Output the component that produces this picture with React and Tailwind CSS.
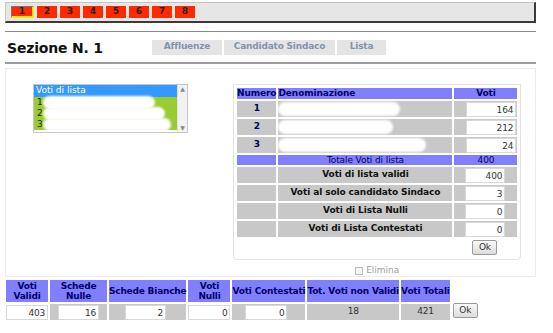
import React from "react";

const sezioni = ["1", "2", "3", "4", "5", "6", "7", "8"];

const liste = [
    { n: "1", voti: "164", blob: "w-[122px]", lb: "w-[112px]" },
    { n: "2", voti: "212", blob: "w-[115px]", lb: "w-[122px]" },
    { n: "3", voti: "24", blob: "w-[148px]", lb: "w-[128px]" },
];

const riepilogo = [
    { label: "Voti di lista validi", value: "400" },
    { label: "Voti al solo candidato Sindaco", value: "3" },
    { label: "Voti di Lista Nulli", value: "0" },
    { label: "Voti di Lista Contestati", value: "0" },
];

function OkButton() {
    return (
        <button
            type="button"
            className="h-[15px] w-[25px] rounded-[2px] border border-[#9a9a9a] bg-gradient-to-b from-[#fafafa] to-[#dcdcdc] text-[9px] leading-none text-[#333]"
        >
            Ok
        </button>
    );
}

function Field({ value, className = "" }) {
    return (
        <div
            className={`h-[15px] border border-[#d8d8d8] bg-white pr-[2px] text-right text-[9px] leading-[14px] text-[#333] ${className}`}
        >
            {value}
        </div>
    );
}

export default function App() {
    return (
        <div className="h-[333px] w-[553px] overflow-hidden bg-white pl-[5px] pt-[2px] font-['DejaVu_Sans',sans-serif] text-[#000066]">
            <div className="w-[531px]">
                {/* barra sezioni */}
                <div className="flex h-[21px] items-center gap-[3px] border border-[#c4c4c4] border-b-2 border-r-2 border-b-[#3a3a3a] border-r-[#3a3a3a] bg-[#e6e6e6] pl-[5px]">
                    {sezioni.map((s, i) => (
                        <div
                            key={s}
                            className={`flex h-[12px] items-center justify-center bg-[#ff2a00] text-[9px] font-bold text-[#222] ${
                                i === 0
                                    ? "w-[23px] border-b-2 border-r-2 border-l border-t border-b-[#ffe600] border-r-[#ffe600] border-l-[#777] border-t-[#777]"
                                    : "w-[20px]"
                            }`}
                        >
                            {s}
                        </div>
                    ))}
                </div>

                <div className="mt-[8px] border-t border-[#8a8a8a]" />

                <div className="flex h-[30px] items-center">
                    <div className="ml-[2px] w-[145px] pt-[2px] text-[14px] font-bold tracking-[-0.2px] text-[#111]">
                        Sezione N. 1
                    </div>
                    <div className="flex gap-[2px] text-[9px] font-bold tracking-[-0.2px] text-[#8294ab]">
                        <div className="flex h-[15px] w-[70px] items-center justify-center bg-[#e4e4e4]">
                            Affluenze
                        </div>
                        <div className="flex h-[15px] w-[111px] items-center justify-center bg-[#e4e4e4]">
                            Candidato Sindaco
                        </div>
                        <div className="flex h-[15px] w-[49px] items-center justify-center bg-[#e4e4e4]">
                            Lista
                        </div>
                    </div>
                </div>

                <div className="border-t-2 border-[#9c9c9c]" />

                {/* pannello lista */}
                <div className="mt-[4px] h-[209px] border border-[#ececec] bg-white">
                    <div className="flex">
                        <div className="ml-[27px] mt-[15px] flex h-[49px] w-[155px] border border-[#c6c6c6]">
                            <div className="flex-1 text-[9px] leading-[11px]">
                                <div className="h-[12px] bg-[#3399ff] pl-[2px] text-white">Voti di lista</div>
                                {liste.map((l) => (
                                    <div key={l.n} className="relative flex h-[11px] bg-[#99cc33] pl-[3px] text-[#222]">
                                        {l.n}
                                        <div className={`absolute left-[9px] top-[-1px] h-[13px] rounded-full bg-white blur-[1px] ${l.lb}`} />
                                    </div>
                                ))}
                            </div>
                            <div className="flex w-[10px] flex-col items-center justify-between border-l border-[#e0e0e0] bg-[#f2f2f2] py-[1px] text-[6px] leading-none text-[#888]">
                                <span>▲</span>
                                <span>▼</span>
                            </div>
                        </div>

                        <div className="ml-[45px] mt-[15px] flex flex-col items-center">
                            <div className="rounded-b-[4px] border border-[#e2e2e2] p-px">
                                <table className="border-separate border-spacing-[2px] text-[9px] tracking-[-0.1px]">
                                    <thead>
                                        <tr className="h-[11px] bg-[#8080ff] font-bold leading-[11px]">
                                            <th className="w-[37px] px-0 text-left">Numero</th>
                                            <th className="w-[174px] text-left">Denominazione</th>
                                            <th className="w-[63px] text-center">Voti</th>
                                        </tr>
                                    </thead>
                                    <tbody>
                                        {liste.map((l) => (
                                            <tr key={l.n} className="h-[16px] bg-[#c8c8c8]">
                                                <td className="text-center font-bold">{l.n}</td>
                                                <td className="relative">
                                                    <div className={`absolute left-0 top-[1px] h-[14px] rounded-full bg-white blur-[1px] ${l.blob}`} />
                                                </td>
                                                <td className="pl-[12px]">
                                                    <Field value={l.voti} className="w-[50px]" />
                                                </td>
                                            </tr>
                                        ))}
                                        <tr className="h-[10px] bg-[#8080ff] leading-[10px]">
                                            <td />
                                            <td className="text-center">Totale Voti di lista</td>
                                            <td className="text-center">400</td>
                                        </tr>
                                        {riepilogo.map((r) => (
                                            <tr key={r.label} className="h-[16px] bg-[#c8c8c8]">
                                                <td />
                                                <td className="text-center font-bold text-[#111]">{r.label}</td>
                                                <td className="pl-[11px]">
                                                    <Field value={r.value} className="w-[40px]" />
                                                </td>
                                            </tr>
                                        ))}
                                        <tr className="h-[17px]">
                                            <td />
                                            <td />
                                            <td className="pl-[18px]">
                                                <OkButton />
                                            </td>
                                        </tr>
                                    </tbody>
                                </table>
                            </div>
                            <div className="mt-[4px] flex items-center gap-[3px] text-[9px] text-[#a0a0a0]">
                                <span className="h-[8px] w-[8px] border border-[#bdbdbd] bg-[#f4f4f4]" />
                                Elimina
                            </div>
                        </div>
                    </div>
                </div>

                {/* riepilogo schede */}
                <div className="mt-[1px] flex items-end">
                    <table className="-ml-[1px] table-fixed border-separate border-spacing-[2px] whitespace-nowrap text-[9px] tracking-[-0.2px]">
                        <thead>
                            <tr className="h-[22px] bg-[#8080ff] text-center font-bold leading-[10px]">
                                <th className="w-[42px]">Voti<br />Validi</th>
                                <th className="w-[57px]">Schede<br />Nulle</th>
                                <th className="w-[77px]">Schede Bianche</th>
                                <th className="w-[42px]">Voti<br />Nulli</th>
                                <th className="w-[70px]">Voti Contestati</th>
                                <th className="w-[91px]">Tot. Voti non Validi</th>
                                <th className="w-[49px]">Voti Totali</th>
                            </tr>
                        </thead>
                        <tbody>
                            <tr className="h-[16px] text-center text-[#333]">
                                <td><Field value="403" className="w-full" /></td>
                                <td className="bg-[#c8c8c8] pl-[8px]"><Field value="16" className="w-[41px]" /></td>
                                <td className="bg-[#c8c8c8] pl-[16px]"><Field value="2" className="w-[41px]" /></td>
                                <td><Field value="0" className="w-full" /></td>
                                <td className="bg-[#c8c8c8] pl-[13px]"><Field value="0" className="w-[42px]" /></td>
                                <td className="bg-[#c8c8c8]">18</td>
                                <td className="bg-[#c8c8c8]">421</td>
                            </tr>
                        </tbody>
                    </table>
                    <div className="mb-[2px] ml-[1px]">
                        <OkButton />
                    </div>
                </div>
            </div>
        </div>
    );
}
